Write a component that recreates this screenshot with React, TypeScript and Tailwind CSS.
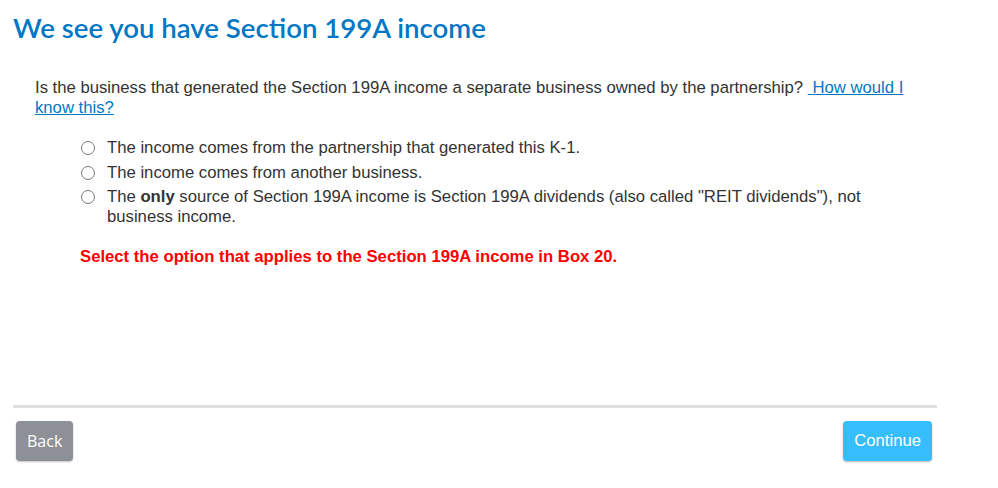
import React, { useState } from 'react';

const options = [
  { id: 'same', label: <>The income comes from the partnership that generated this K-1.</> },
  { id: 'other', label: <>The income comes from another business.</> },
  {
    id: 'reit',
    label: (
      <>
        The <b>only</b> source of Section 199A income is Section 199A dividends (also called "REIT dividends"), not
        business income.
      </>
    ),
  },
];

export default function App() {
  const [selected, setSelected] = useState<string | null>(null);

  return (
    <div className="w-[998px] h-[488px] bg-white flex flex-col text-[#333] font-['Liberation_Sans',Arial,sans-serif]">
      <h1 className="pl-[13px] pt-[11px] text-[27.6px] leading-[34px] font-semibold text-[#0077c5] font-['Lato','Open_Sans',sans-serif]">
        We see you have Section 199A income
      </h1>

      <p className="ml-[35px] mt-[33px] w-[878px] text-[16.7px] leading-[20px]">
        Is the business that generated the Section 199A income a separate business owned by the partnership?{'\u00a0'}
        <a href="#" className="text-[#0077c5] underline">
          {'\u00a0'}How would I know this?
        </a>
      </p>

      <div className="ml-[81px] mt-[20px] flex flex-col gap-[4.5px]">
        {options.map((o) => (
          <label key={o.id} className="flex items-start cursor-pointer">
            <input
              type="radio"
              name="src"
              checked={selected === o.id}
              onChange={() => setSelected(o.id)}
              className="mt-[3px] w-[14px] h-[14px] shrink-0 appearance-none rounded-full border border-[#7a7a7a] bg-white checked:border-[4px] checked:border-[#0075ff]"
            />
            <span className="ml-[12px] w-[790px] text-[16.7px] leading-[20px]">{o.label}</span>
          </label>
        ))}
      </div>

      <p className="ml-[80px] mt-[20px] text-[16.7px] leading-[20px] font-bold text-[#ff0000]">
        Select the option that applies to the Section 199A income in Box 20.
      </p>

      <div className="flex-1" />

      <div className="ml-[13px] w-[924px] h-[3px] bg-[#e0e0e0]" />

      <div className="ml-[16px] w-[916px] mt-[13px] mb-[27px] flex justify-between">
        <button className="h-[40px] px-[11px] rounded-[4px] bg-[#8d9096] text-white text-[16px] shadow-[0_1px_2px_rgba(0,0,0,0.25)] font-['Open_Sans',sans-serif]">
          Back
        </button>
        <button className="h-[40px] px-[11px] rounded-[4px] bg-[#36bdfd] text-white text-[16.7px] shadow-[0_1px_2px_rgba(0,0,0,0.3)]">
          Continue
        </button>
      </div>
    </div>
  );
}
